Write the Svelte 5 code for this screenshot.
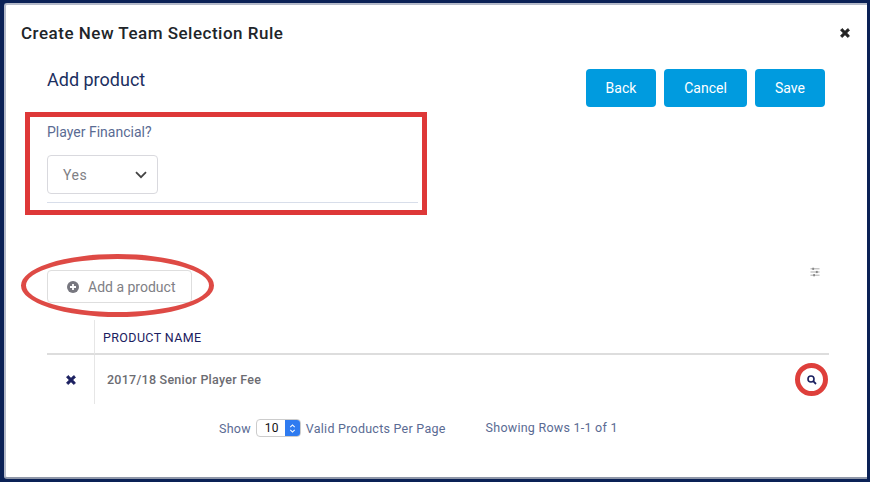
<script>
  const columns = ["Back", "Cancel", "Save"];
</script>

<div class="frame">
  <div class="modal">
    <header class="modal-head">
      <h1>Create New Team Selection Rule</h1>
      <svg class="close" viewBox="1 1 10 10" width="10" height="10" aria-hidden="true"><path d="M1.5 3.2 3.2 1.5 6 4.3 8.8 1.5 10.5 3.2 7.7 6 10.5 8.8 8.8 10.5 6 7.7 3.2 10.5 1.5 8.8 4.3 6Z" fill="#222" stroke="#222" stroke-width=".8" stroke-linejoin="round"/></svg>
    </header>

    <div class="top-row">
      <h2>Add product</h2>
      <div class="actions">
        {#each columns as label}
          <button class="primary">{label}</button>
        {/each}
      </div>
    </div>

    <section class="field">
      <div class="label">Player Financial?</div>
      <div class="select">
        <span>Yes</span>
        <svg viewBox="0 0 12 8" width="12" height="8" aria-hidden="true"><path d="M1 1.2 6 6.2 11 1.2" fill="none" stroke="#444" stroke-width="1.8"/></svg>
      </div>
      <div class="rule"></div>
    </section>

    <div class="add-row">
      <button class="add">
        <svg viewBox="0 0 12 12" width="12" height="12" aria-hidden="true"><circle cx="6" cy="6" r="6" fill="#77777f"/><path d="M6 3v6M3 6h6" stroke="#fff" stroke-width="1.8"/></svg>
        Add a product
      </button>
      <svg class="sliders" viewBox="0 0 11 10" width="10" height="10" aria-hidden="true">
        <path d="M.5 1.5h10M.5 5h10M.5 8.5h10" stroke="#999" stroke-width=".9"/>
        <rect x="2.5" y=".3" width="2" height="2.4" fill="#888"/><rect x="6.5" y="3.8" width="2" height="2.4" fill="#888"/><rect x="3.5" y="7.3" width="2" height="2.4" fill="#888"/>
      </svg>
    </div>

    <div class="table">
      <div class="th-x"></div>
      <div class="th">PRODUCT NAME</div>
      <div class="td-x">
        <svg viewBox="1 1 10 10" width="10" height="10" aria-hidden="true"><path d="M1.5 3.2 3.2 1.5 6 4.3 8.8 1.5 10.5 3.2 7.7 6 10.5 8.8 8.8 10.5 6 7.7 3.2 10.5 1.5 8.8 4.3 6Z" fill="#1b2060" stroke="#1b2060" stroke-width=".8" stroke-linejoin="round"/></svg>
      </div>
      <div class="td">
        <span>2017/18 Senior Player Fee</span>
        <span class="ring">
          <svg viewBox="0 0 10 10" width="10" height="10" aria-hidden="true"><circle cx="4" cy="4" r="3" fill="none" stroke="#1b2060" stroke-width="1.6"/><path d="M6.2 6.2 9 9" stroke="#1b2060" stroke-width="1.8"/></svg>
        </span>
      </div>
    </div>

    <footer class="pager">
      <div class="per-page">
        <span>Show</span>
        <span class="mini-select"><b>10</b><i><svg viewBox="0 0 8 12" width="7" height="11" aria-hidden="true"><path d="M1.5 4.5 4 2 6.5 4.5M1.5 7.5 4 10 6.5 7.5" fill="none" stroke="#fff" stroke-width="1.2"/></svg></i></span>
        <span>Valid Products Per Page</span>
      </div>
      <div class="rows">Showing Rows 1-1 of 1</div>
    </footer>

    <div class="mark-box"></div>
    <div class="mark-ellipse"></div>
  </div>
</div>

<style>
  :global(body) { margin: 0; background: #0a2156; }
  .frame {
    width: 870px; height: 482px; box-sizing: border-box;
    padding: 3px 3px 3px 4px;
    font-family: Roboto, "Liberation Sans", sans-serif;
  }
  .modal {
    position: relative; height: 100%; box-sizing: border-box;
    background: #fff; border-radius: 3px 0 0 3px;
    border-top: 2px solid #b4bac9; border-left: 2px solid #b4bac9; border-bottom: 2px solid #8f97a8;
  }
  .modal-head {
    display: flex; justify-content: space-between; align-items: center;
    height: 47px; padding: 9px 17px 0 15px; box-sizing: border-box;
  }
  h1 { margin: 0; font-size: 17px; font-weight: 500; color: #212529; letter-spacing: .5px; }
  .top-row {
    display: flex; justify-content: space-between; align-items: flex-start;
    padding: 0 42px 0 41px; margin-top: 15px;
  }
  h2 { margin: 0; font-size: 18px; font-weight: 400; color: #1c2f5f; line-height: 24px; padding-top: 1px; }
  .actions { display: flex; gap: 8px; margin-top: 2px; }
  .primary {
    height: 38px; padding: 0; border: 0; border-radius: 4px; background: #009bdf; color: #fff;
    font: 400 14px Roboto, sans-serif; width: 70px;
  }
  .primary:nth-child(2) { width: 83px; }
  .field { margin-left: 41px; width: 371px; margin-top: 16px; }
  .label { font-size: 14px; color: #5a6b93; line-height: 18px; }
  .select {
    margin-top: 14px; width: 111px; height: 39px; box-sizing: border-box;
    border: 1px solid #d9d9de; border-radius: 4px;
    display: flex; align-items: center; justify-content: space-between; padding: 0 10px 0 15px;
    font-size: 14px; color: #808085; letter-spacing: .04em;
  }
  .rule { height: 1px; background: #d8deea; margin-top: 8px; }
  .add-row {
    display: flex; justify-content: space-between; align-items: flex-start;
    padding: 0 47px 0 41px; margin-top: 67px;
  }
  .add {
    width: 145px; height: 33px; box-sizing: border-box; border: 1px solid #dedede; border-radius: 4px;
    background: #fff; padding: 0 0 0 19px; display: flex; align-items: center; gap: 9px;
    font: 400 14px Roboto, sans-serif; color: #808085;
  }
  .sliders { margin-top: -3px; }
  .table {
    margin: 17px 38px 0 41px;
    display: grid; grid-template-columns: 48px 1fr; grid-template-rows: 35px 49px;
  }
  .th-x { border-right: 1px solid #e6e6e6; border-bottom: 2px solid #ddd; }
  .th {
    border-bottom: 2px solid #ddd; padding: 1px 0 0 8px; display: flex; align-items: center;
    font-size: 12.5px; color: #1b2060; letter-spacing: .03em;
  }
  .td-x { border-right: 1px solid #e6e6e6; display: flex; align-items: center; justify-content: center; }
  .td {
    display: flex; justify-content: space-between; align-items: center; padding: 0 1px 0 12px;
    font-size: 12.5px; font-weight: 500; color: #6c6c72; letter-spacing: .02em;
  }
  .ring {
    width: 33px; height: 33px; box-sizing: border-box;
    border: 5px solid #de3f3b; border-radius: 50%; display: flex; align-items: center; justify-content: center;
  }
  .pager { display: flex; margin-left: 213px; margin-top: 15px; font-size: 12.5px; color: #5a6b93; letter-spacing: .02em; }
  .per-page { display: flex; align-items: center; gap: 5px; }
  .mini-select {
    display: flex; width: 45px; height: 18px; box-sizing: border-box; border: 1px solid #ccc; border-radius: 4px; overflow: hidden;
    background: #fff;
  }
  .mini-select b { flex: 1; font-weight: 400; color: #111; font-size: 12px; padding-left: 8px; line-height: 16px; }
  .mini-select i { width: 15px; background: #2f7bf0; display: flex; align-items: center; justify-content: center; }
  .rows { margin-left: 40px; margin-top: 1px; }
  .mark-box {
    position: absolute; left: 19px; top: 107px; width: 402px; height: 103px; box-sizing: border-box;
    border: 5px solid #de3838;
  }
  .mark-ellipse {
    position: absolute; left: 15px; top: 249px; width: 193px; height: 63px; box-sizing: border-box;
    border: 5px solid #de4a45; border-radius: 50%;
  }
</style>
